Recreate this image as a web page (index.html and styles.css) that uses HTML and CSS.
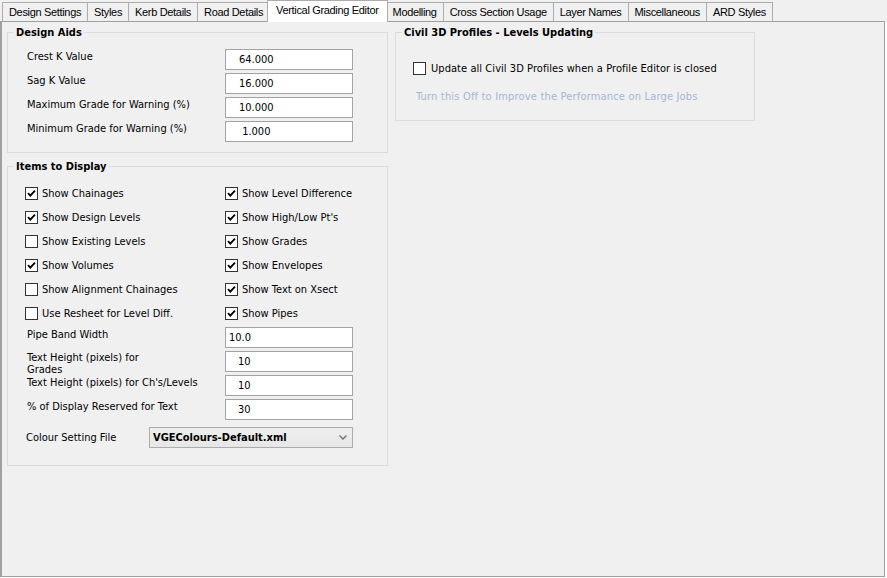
FILE: index.html
```html
<!DOCTYPE html>
<html>
<head>
<meta charset="utf-8">
<link rel="stylesheet" href="styles.css">
</head>
<body>
<div class="tabs">
  <div class="tab">Design Settings</div>
  <div class="tab">Styles</div>
  <div class="tab">Kerb Details</div>
  <div class="tab">Road Details</div>
  <div class="tab active">Vertical Grading Editor</div>
  <div class="tab">Modelling</div>
  <div class="tab">Cross Section Usage</div>
  <div class="tab">Layer Names</div>
  <div class="tab">Miscellaneous</div>
  <div class="tab last">ARD Styles</div>
</div>
<div class="panel">
  <div class="col">
    <fieldset class="group aids">
      <legend>Design Aids</legend>
      <div class="body">
        <div class="field"><span class="lbl">Crest K Value</span><input class="tb" type="text" value="64.000"></div>
        <div class="field"><span class="lbl">Sag K Value</span><input class="tb" type="text" value="16.000"></div>
        <div class="field"><span class="lbl">Maximum Grade for Warning (%)</span><input class="tb" type="text" value="10.000"></div>
        <div class="field"><span class="lbl">Minimum Grade for Warning (%)</span><input class="tb" type="text" value=" 1.000"></div>
      </div>
    </fieldset>
    <fieldset class="group items">
      <legend>Items to Display</legend>
      <div class="body">
        <div class="checks">
          <div class="chk"><span class="cb on"><svg viewBox="0 0 11 11"><path d="M2 5.2 L4.3 7.6 L9 2.6"/></svg></span>Show Chainages</div>
          <div class="chk"><span class="cb on"><svg viewBox="0 0 11 11"><path d="M2 5.2 L4.3 7.6 L9 2.6"/></svg></span>Show Level Difference</div>
          <div class="chk"><span class="cb on"><svg viewBox="0 0 11 11"><path d="M2 5.2 L4.3 7.6 L9 2.6"/></svg></span>Show Design Levels</div>
          <div class="chk"><span class="cb on"><svg viewBox="0 0 11 11"><path d="M2 5.2 L4.3 7.6 L9 2.6"/></svg></span>Show High/Low Pt's</div>
          <div class="chk"><span class="cb"></span>Show Existing Levels</div>
          <div class="chk"><span class="cb on"><svg viewBox="0 0 11 11"><path d="M2 5.2 L4.3 7.6 L9 2.6"/></svg></span>Show Grades</div>
          <div class="chk"><span class="cb on"><svg viewBox="0 0 11 11"><path d="M2 5.2 L4.3 7.6 L9 2.6"/></svg></span>Show Volumes</div>
          <div class="chk"><span class="cb on"><svg viewBox="0 0 11 11"><path d="M2 5.2 L4.3 7.6 L9 2.6"/></svg></span>Show Envelopes</div>
          <div class="chk"><span class="cb"></span>Show Alignment Chainages</div>
          <div class="chk"><span class="cb on"><svg viewBox="0 0 11 11"><path d="M2 5.2 L4.3 7.6 L9 2.6"/></svg></span>Show Text on Xsect</div>
          <div class="chk"><span class="cb"></span>Use Resheet for Level Diff.</div>
          <div class="chk"><span class="cb on"><svg viewBox="0 0 11 11"><path d="M2 5.2 L4.3 7.6 L9 2.6"/></svg></span>Show Pipes</div>
        </div>
        <div class="field"><span class="lbl">Pipe Band Width</span><input class="tb tight" type="text" value="10.0"></div>
        <div class="field"><span class="lbl two">Text Height (pixels) for<br>Grades</span><input class="tb mid" type="text" value="10"></div>
        <div class="field"><span class="lbl">Text Height (pixels) for Ch's/Levels</span><input class="tb mid" type="text" value="10"></div>
        <div class="field"><span class="lbl">% of Display Reserved for Text</span><input class="tb mid" type="text" value="30"></div>
        <div class="field combo-row">
          <span class="lbl">Colour Setting File</span>
          <div class="combo"><span>VGEColours-Default.xml</span><svg class="chev" viewBox="0 0 8 5"><polyline points="0.5,0.5 4,4 7.5,0.5"/></svg></div>
        </div>
      </div>
    </fieldset>
  </div>
  <div class="col">
    <fieldset class="group civil">
      <legend>Civil 3D Profiles - Levels Updating</legend>
      <div class="body">
        <div class="chk wide"><span class="cb"></span>Update all Civil 3D Profiles when a Profile Editor is closed</div>
        <div class="hint">Turn this Off to Improve the Performance on Large Jobs</div>
      </div>
    </fieldset>
  </div>
</div>
</body>
</html>
```

FILE: styles.css
```css
* { box-sizing: border-box; }

html, body {
  margin: 0;
  height: 100%;
}

body {
  background: #f0f0f0;
  font-family: "DejaVu Sans Condensed", "DejaVu Sans", sans-serif;
  font-stretch: condensed;
  font-size: 11px;
  line-height: 13px;
  color: #000;
  display: flex;
  flex-direction: column;
  overflow: hidden;
}

/* ---------- tab strip ---------- */
.tabs {
  flex: none;
  height: 21px;
  display: flex;
  align-items: flex-end;
  padding-left: 2px;
  font-family: "Liberation Sans", Arial, sans-serif;
  font-stretch: normal;
  font-size: 11px;
  letter-spacing: -0.33px;
}

.tab {
  height: 19px;
  padding: 1px 6px 0;
  margin-right: -1px;
  border: 1px solid #acacac;
  border-bottom: none;
  background: #f0f0f0;
  display: flex;
  align-items: center;
  white-space: nowrap;
}

.tab.active {
  position: relative;
  z-index: 1;
  height: 22px;
  margin: 0 -2px -1px -2px;
  padding: 0 8px 3px;
  background: #fff;
  border-color: #acacac;
}

/* ---------- page ---------- */
.panel {
  flex: 1;
  margin: 0 2px 1px 0;
  border: 1px solid #a0a0a0;
  border-left-width: 2px;
  background: #f0f0f0;
  box-shadow: 1px 1px 0 #fff, 2px 1px 0 #fff;
  display: grid;
  grid-template-columns: 381px 360px;
  column-gap: 7px;
  align-items: start;
  padding: 4px 0 0 5px;
}

.col {
  display: flex;
  flex-direction: column;
  gap: 7px;
}

/* ---------- group boxes ---------- */
.group {
  margin: 0;
  min-width: 0;
  border: 1px solid #dcdcdc;
  padding: 10px 0 10px 0;
}

.group legend {
  font-weight: bold;
  line-height: 13px;
  padding: 0 2px;
  margin-left: 6px;
}

.body {
  padding-left: 17px;
  display: flex;
  flex-direction: column;
  gap: 3px;
}

.items { padding-bottom: 17px; }
.civil { padding-bottom: 17px; }

.field {
  height: 21px;
  display: grid;
  grid-template-columns: 200px 128px;
  align-items: start;
}

.lbl {
  padding-left: 2px;
  padding-top: 1px;
  white-space: nowrap;
}

.lbl.two {
  line-height: 12px;
  padding-top: 1px;
}

.tb {
  width: 128px;
  height: 21px;
  margin: 0;
  border: 1px solid #a3a3a3;
  background: #fff;
  font: inherit;
  color: #000;
  padding: 0 0 0 13px;
  outline: none;
}

.tb.tight { padding-left: 3px; }
.tb.mid { padding-left: 12px; }

/* ---------- checkboxes ---------- */
.checks {
  display: grid;
  grid-template-columns: 200px 200px;
  grid-auto-rows: 21px;
  row-gap: 3px;
}

.chk {
  display: flex;
  align-items: center;
  gap: 4px;
  white-space: nowrap;
}

.cb {
  flex: none;
  width: 13px;
  height: 13px;
  border: 1px solid #333;
  background: #fff;
  display: flex;
}

.cb svg {
  width: 11px;
  height: 11px;
}

.cb svg path {
  fill: none;
  stroke: #000;
  stroke-width: 1.9;
}

.chk.wide {
  height: 21px;
  margin-top: 9px;
  gap: 5px;
  letter-spacing: 0.06px;
}

.hint {
  margin-top: 8px;
  padding-left: 3px;
  color: #a3b7d4;
  letter-spacing: 0.18px;
}

/* ---------- combo ---------- */
.combo-row {
  margin-top: 4px;
  grid-template-columns: 124px 204px;
  align-items: center;
}

.combo-row .lbl {
  padding: 0 0 0 1px;
}

.combo {
  width: 204px;
  height: 21px;
  border: 1px solid #acacac;
  background: linear-gradient(#efefef, #e6e6e6);
  display: flex;
  align-items: center;
  justify-content: space-between;
  padding: 0 5px 0 3px;
  font-weight: bold;
}

.chev {
  width: 8px;
  height: 5px;
}

.chev polyline {
  fill: none;
  stroke: #6d6d6d;
  stroke-width: 1.3;
}
```
